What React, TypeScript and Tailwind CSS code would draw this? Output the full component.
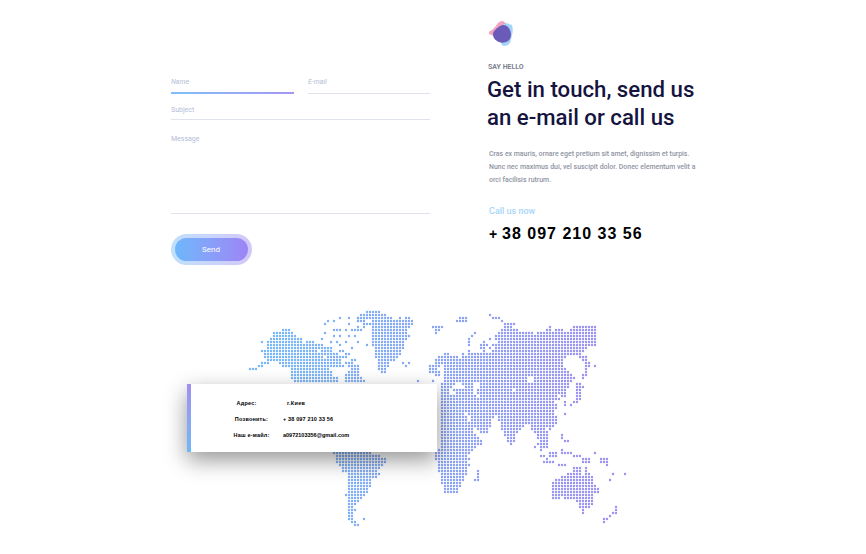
const rows: [number, [number, number][]][] = [
  // greenland, arctic and north america
  [312, [[367, 378]]],
  [315, [[360, 384]]],
  [318, [[357, 365], [370, 390], [398, 398], [405, 408]]],
  [321, [[358, 362], [372, 411]]],
  [324, [[363, 366], [370, 412]]],
  [327, [[372, 408]]],
  [330, [[283, 288], [371, 405]]],
  [333, [[274, 292], [371, 405]]],
  [336, [[272, 294], [371, 408]]],
  [339, [[271, 300], [372, 405]]],
  [342, [[262, 262], [268, 300], [307, 313], [373, 402]]],
  [345, [[266, 316], [319, 322], [373, 402]]],
  [348, [[268, 319], [322, 330], [376, 402]]],
  [351, [[262, 315], [322, 331], [338, 341], [376, 398]]],
  [354, [[263, 318], [321, 336], [345, 348], [376, 400]]],
  [357, [[265, 320], [327, 339], [342, 345], [376, 395]]],
  [360, [[268, 333], [336, 339], [351, 354], [377, 392]]],
  [363, [[262, 266], [280, 339], [345, 351], [377, 387], [402, 402], [408, 408]]],
  [366, [[259, 262], [283, 336], [339, 342], [348, 357], [378, 387], [405, 405]]],
  [369, [[250, 256], [290, 327], [350, 356], [378, 384]]],
  [372, [[292, 329], [347, 356], [380, 384]]],
  [375, [[292, 330], [345, 356]]],
  [378, [[292, 336], [345, 360]]],
  [381, [[294, 335], [345, 363], [417, 417]]],

  // europe, asia
  [315, [[488, 488]]],
  [318, [[493, 499], [460, 466]]],
  [322, [[500, 500], [457, 462], [464, 466]]],
  [325, [[503, 512]]],
  [328, [[503, 510], [432, 442], [548, 548], [572, 593]]],
  [331, [[500, 516], [435, 438], [547, 550], [555, 562], [570, 595]]],
  [334, [[497, 530], [435, 435], [475, 475], [536, 595]]],
  [337, [[496, 593], [472, 472]]],
  [340, [[496, 593], [468, 468], [490, 490]]],
  [343, [[497, 595], [468, 468], [482, 482]]],
  [346, [[498, 593], [468, 468], [480, 486], [492, 494]]],
  [349, [[495, 585], [480, 483], [488, 490]]],
  [352, [[493, 582], [468, 468], [482, 484]]],
  [355, [[443, 448], [463, 463], [468, 580]]],
  [358, [[438, 455], [462, 563], [580, 586]]],
  [361, [[435, 562], [582, 585]]],
  [364, [[435, 440], [445, 561], [585, 587]]],
  [367, [[430, 437], [445, 562], [585, 587], [594, 594]]],
  [370, [[428, 435], [445, 449], [453, 563], [585, 585]]],
  [373, [[430, 435], [438, 438], [445, 566], [585, 585]]],
  [376, [[435, 438], [445, 570], [582, 585]]],
  [379, [[445, 526], [534, 573], [582, 582]]],
  [382, [[433, 433], [445, 526], [534, 571]]],
  [384, [[442, 452], [463, 472], [480, 567], [575, 578]]],
  [387, [[442, 450], [465, 472], [480, 567], [577, 582]]],
  [390, [[442, 448], [454, 470], [478, 510], [515, 565], [577, 580]]],
  [393, [[442, 447], [455, 470], [478, 565], [575, 578]]],
  [396, [[442, 450], [452, 475], [480, 555], [561, 564], [576, 578]]],
  [399, [[442, 558], [575, 578]]],
  [402, [[442, 552], [563, 565], [573, 575]]],
  [405, [[442, 555], [565, 565], [570, 570]]],
  [408, [[442, 552], [556, 556]]],
  [411, [[442, 462], [466, 550], [553, 553]]],
  [414, [[442, 463], [468, 552], [565, 565]]],
  [417, [[440, 466], [470, 492], [497, 555]]],
  [420, [[440, 466], [470, 488], [497, 556]]],
  [423, [[440, 468], [472, 488], [500, 556]]],
  [426, [[440, 470], [474, 488], [500, 522], [530, 552]]],
  [429, [[440, 470], [477, 487], [502, 518], [530, 542], [548, 550]]],
  [432, [[440, 472], [480, 485], [503, 516], [533, 545]]],

  // africa, south and southeast asia, islands
  [435, [[440, 475], [505, 514], [536, 547], [560, 560]]],
  [438, [[440, 478], [507, 513], [538, 547], [560, 560]]],
  [441, [[440, 480], [508, 512], [540, 546], [565, 568]]],
  [444, [[440, 480], [511, 511], [541, 545], [538, 538]]],
  [447, [[440, 475], [540, 545], [533, 533]]],
  [450, [[438, 470], [540, 540], [560, 560]]],
  [453, [[435, 468], [334, 368], [548, 555], [560, 560], [563, 570], [593, 593]]],
  [456, [[435, 466], [336, 378], [540, 543], [548, 555], [573, 580]]],
  [459, [[436, 467], [336, 385], [545, 545], [582, 588], [600, 607]]],
  [462, [[437, 466], [337, 385], [543, 552], [582, 588], [600, 604], [606, 606]]],
  [465, [[437, 467], [338, 380], [557, 565], [607, 607]]],
  [468, [[438, 466], [341, 377], [572, 578], [584, 584]]],
  [471, [[438, 466], [477, 477], [342, 375], [572, 578], [584, 584]]],
  [474, [[440, 465], [477, 477], [347, 377], [566, 578], [584, 587], [612, 612], [625, 625]]],
  [477, [[440, 463], [477, 477], [347, 374], [560, 590]]],
  [480, [[441, 462], [473, 477], [347, 370], [556, 592], [609, 609]]],
  [483, [[442, 460], [347, 370], [551, 592]]],
  [486, [[443, 458], [347, 369], [551, 594]]],
  [489, [[444, 456], [347, 367], [551, 596]]],
  [492, [[445, 455], [347, 365], [551, 596]]],
  [495, [[344, 344], [347, 362], [551, 592]]],
  [498, [[347, 360], [551, 558], [565, 592]]],
  [501, [[347, 357], [575, 590]]],
  [504, [[347, 355], [578, 590]]],
  [507, [[347, 352], [578, 587], [615, 615]]],
  [510, [[347, 353], [582, 582], [615, 615]]],
  [513, [[347, 350], [582, 582], [612, 615]]],
  [516, [[347, 350], [609, 609]]],
  [519, [[347, 350], [362, 362], [602, 607]]],
  [522, [[350, 355], [603, 603]]],
  [525, [[353, 358]]],
];

const scatter: [number, number][] = [
  [328, 322], [332, 321], [340, 319], [347, 319], [348, 323], [358, 318], [358, 322], [358, 326],
  [363, 322], [363, 326], [325, 325], [332, 329], [335, 329], [338, 329], [344, 329], [350, 330],
  [353, 330], [356, 330], [360, 330], [323, 333], [332, 336], [339, 336], [347, 337], [353, 337],
  [320, 339], [329, 342], [335, 342], [344, 342], [356, 343], [365, 345], [338, 346], [350, 348],
];

// everything snaps to the 3px grid of the map
const snap = (n: number) => Math.round(n / 3) * 3;

const dots: [number, number][] = scatter.map(([x, y]) => [snap(x) + 1, snap(y)]);
rows.forEach(([y, spans]) => {
  spans.forEach(([from, to]) => {
    for (let x = snap(from); x <= snap(to); x += 3) dots.push([x + 1, snap(y)]);
  });
});

function DotMap() {
  return (
    <svg width="400" height="230" viewBox="248 305 400 230" className="ml-[248px] block">
      <defs>
        <linearGradient id="mapFill" gradientUnits="userSpaceOnUse" x1="262" y1="0" x2="600" y2="0">
          <stop offset="0" stopColor="#74b8f7" />
          <stop offset="1" stopColor="#9c90f0" />
        </linearGradient>
      </defs>
      <g fill="url(#mapFill)">
        {dots.map(([x, y], i) => (
          <circle key={i} cx={x} cy={y} r="1.2" />
        ))}
      </g>
    </svg>
  );
}

function Logo() {
  return (
    <svg width="25" height="27" viewBox="0 0 25 27" className="ml-px block">
      <path d="M13 1c2 0 3 2 5 3l2 4-2 10-8 3-5-5-5-2c-1-2 1-3 3-4l3-3 3-4c1-1 3-2 4-2z" fill="#f2a3bd" />
      <path d="M17 3l6 2c1 3 1 7 0 10s-1 6-2 8-4 3-6 3-3-3-4-5 1-8 2-11 1-7 4-7z" fill="#a5d4f8" />
      <path d="M11 6c3-2 6-1 8 1s3 5 3 8-2 6-5 7-6 1-9-1-4-4-4-7 4-6 7-8z" fill="#6b5bb9" />
    </svg>
  );
}

const inputCls =
  "block w-full h-[18px] border-b border-[#dfe3ee] bg-transparent text-[7px] outline-none placeholder:text-[#b3bdd6] font-['Roboto',sans-serif]";

export default function App() {
  return (
    <div className="w-[866px] h-[554px] bg-white overflow-hidden">
      <div className="flex h-[305px]">
        <form className="ml-[171px] w-[259px] pt-[76px]">
          <div className="flex gap-[14px]">
            <div className="w-[123px]">
              <input placeholder="Name" className={inputCls + " !h-[16px] !border-0 italic pb-[4px]"} />
              <div className="h-[2px] bg-gradient-to-r from-[#7cc0fa] to-[#a496f2]" />
            </div>
            <input placeholder="E-mail" className={inputCls + " !w-[122px] italic pb-[5px]"} />
          </div>
          <input placeholder="Subject" className={inputCls + " mt-[8px] pb-[2px]"} />
          <textarea
            placeholder="Message"
            className="mt-[14px] block w-full h-[80px] resize-none border-b border-[#dfe3ee] bg-transparent text-[7px] outline-none placeholder:text-[#b3bdd6] font-['Roboto',sans-serif]"
          />
          <div className="mt-[20px] w-[81px] h-[31px] p-[4px] rounded-full bg-gradient-to-r from-[#bfe0fb] to-[#d2c8f8]">
            <button
              type="button"
              className="block w-full h-full pr-px rounded-full bg-gradient-to-r from-[#6cb7fb] to-[#9b85f6] text-white text-[8px] font-['Roboto',sans-serif]"
            >
              Send
            </button>
          </div>
        </form>

        <div className="ml-[58px] w-[240px] pt-[20px] font-['Roboto',sans-serif]">
          <Logo />
          <div className="mt-[15px] text-[7px] leading-[10px] font-bold text-[#7d8290]">SAY HELLO</div>
          <h1 className="mt-[3px] -ml-px text-[22.2px] leading-[28px] font-medium text-[#14143f]">
            Get in touch, send us
            <br />
            an e-mail or call us
          </h1>
          <p className="mt-[17px] ml-px text-[6.95px] leading-[13px] font-medium text-[#8f94a3] whitespace-nowrap">
            Cras ex mauris, ornare eget pretium sit amet, dignissim et turpis.
            <br />
            Nunc nec maximus dui, vel suscipit dolor. Donec elementum velit a
            <br />
            orci facilisis rutrum.
          </p>
          <div className="mt-[18px] ml-px text-[9px] leading-[12px] font-medium text-[#a8d5f8]">Call us now</div>
          <div className="mt-[7px] ml-px text-[16px] leading-[20px] font-bold text-black font-['Liberation_Sans',sans-serif] whitespace-nowrap">
            <span className="text-[14px] tracking-[0.5px]">+ </span>
            <span className="tracking-[1px]">38 097 210 33 56</span>
          </div>
        </div>
      </div>

      <div className="relative h-[249px]">
        <DotMap />
        <div className="absolute left-[187px] top-[79px] w-[250px] h-[68px] flex bg-white shadow-[0_8px_22px_rgba(0,0,0,0.42)] font-['Liberation_Sans',sans-serif] text-[5.5px] font-bold text-black">
          <div className="w-[4px] bg-gradient-to-b from-[#a08ff0] to-[#6db8f8]" />
          <div className="pl-[42px] pt-[16px] flex flex-col gap-[9px]">
            <div className="flex h-[7px] items-center">
              <span className="w-[37px] pr-[10px] text-center whitespace-nowrap tracking-[0.2px]">Адрес:</span>
              <span className="ml-[17px] whitespace-nowrap tracking-[0.3px]">г.Киев</span>
            </div>
            <div className="flex h-[7px] items-center">
              <span className="w-[37px] text-center whitespace-nowrap tracking-[0.2px]">Позвонить:</span>
              <span className="ml-[13px] whitespace-nowrap tracking-[0.15px]">+ 38 097 210 33 56</span>
            </div>
            <div className="flex h-[7px] items-center">
              <span className="w-[37px] text-center whitespace-nowrap tracking-[0.2px]">Наш е-майл:</span>
              <span className="ml-[13px] whitespace-nowrap">a0972103356@gmail.com</span>
            </div>
          </div>
        </div>
      </div>
    </div>
  );
}
